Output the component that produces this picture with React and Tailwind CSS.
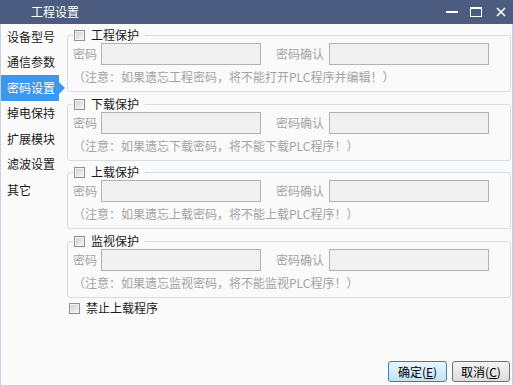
import { useState } from "react";

const menu = ["设备型号", "通信参数", "密码设置", "掉电保持", "扩展模块", "滤波设置", "其它"];

const groups = [
    { title: "工程保护", note: "（注意：如果遗忘工程密码，将不能打开PLC程序并编辑！）", gap: "mt-0" },
    { title: "下载保护", note: "（注意：如果遗忘下载密码，将不能下载PLC程序！）", gap: "mt-[5px]" },
    { title: "上载保护", note: "（注意：如果遗忘上载密码，将不能上载PLC程序！）", gap: "mt-[4px]" },
    { title: "监视保护", note: "（注意：如果遗忘监视密码，将不能监视PLC程序！）", gap: "mt-[5px]" },
];

function CheckBox({ checked, onClick }) {
    return (
        <span
            onClick={onClick}
            className="w-[11px] h-[11px] shrink-0 border border-[#8f8f8f] bg-gradient-to-br from-[#cfcfcf] to-[#f7f7f7] shadow-[inset_0_0_0_1px_#f2f2f2] flex items-center justify-center text-[9px] leading-none text-[#333]"
        >
            {checked ? "✓" : ""}
        </span>
    );
}

function Group({ title, note, gap, checked, onToggle }) {
    return (
        <fieldset className={`${gap} border border-[#d5dde6] rounded-[3px] px-[5px] pb-[6px] h-[64px]`}>
            <legend className="px-[1px] pr-[6px] h-[14px] flex items-center gap-[6px] text-[12px] leading-[14px] text-[#1a1a1a]">
                <CheckBox checked={checked} onClick={onToggle} />
                <span>{title}</span>
            </legend>
            <div className="mt-[1px] flex items-center text-[12px] text-[#a3a3a3]">
                <span className="w-[24px] leading-[14px]">密码</span>
                <input disabled className="ml-[4px] w-[160px] h-[22px] border border-[#b2b2b2] bg-[#f0f0f0]" />
                <span className="ml-[15px] leading-[14px]">密码确认</span>
                <input disabled className="ml-[5px] w-[160px] h-[22px] border border-[#b2b2b2] bg-[#f0f0f0]" />
            </div>
            <p className="mt-[5px] text-[12px] leading-[14px] text-[#a3a3a3]">{note}</p>
        </fieldset>
    );
}

export default function App() {
    const [checks, setChecks] = useState([false, false, false, false]);
    const [noUpload, setNoUpload] = useState(false);
    const active = 2;

    const toggle = (i) => setChecks(checks.map((c, j) => (j === i ? !c : c)));

    return (
        <div className="w-[513px] h-[386px] flex flex-col bg-[#fafafa] border-x border-b border-[#c8cfdf] font-['Noto_Sans_CJK_SC',sans-serif] select-none">
            {/* Title bar */}
            <div className="h-[24px] shrink-0 -mx-px bg-[#4b5c80] flex items-center text-white">
                <span className="ml-[31px] text-[12px] leading-none">工程设置</span>
                <div className="ml-auto flex items-center">
                    <span className="w-[12px] h-[2px] bg-white" />
                    <span className="ml-[12px] w-[12px] h-[10px] border border-white border-t-2" />
                    <svg className="ml-[14px] mr-[7px]" width="10" height="10" viewBox="0 0 10 10">
                        <path d="M1 1 L9 9 M9 1 L1 9" stroke="#fff" strokeWidth="1.6" />
                    </svg>
                </div>
            </div>

            <div className="flex-1 flex min-h-0">
                {/* Sidebar */}
                <div className="w-[66px] shrink-0 flex flex-col">
                    {menu.map((m, i) =>
                        i === active ? (
                            <div key={m} className="h-[25.5px] flex items-center">
                                <div className="w-[58px] h-full bg-[#3c97ef] flex items-center pl-[6px] text-[12px] text-white">{m}</div>
                                <span className="w-0 h-0 border-y-[6px] border-y-transparent border-l-[6px] border-l-[#3c97ef]" />
                            </div>
                        ) : (
                            <div key={m} className="h-[25.5px] flex items-center pl-[6px] text-[12px] text-[#1a1a1a]">
                                {m}
                            </div>
                        )
                    )}
                </div>

                {/* Content */}
                <div className="flex-1 flex flex-col pt-[4px] pr-[1px] pb-[3px]">
                    {groups.map((g, i) => (
                        <Group key={g.title} {...g} checked={checks[i]} onToggle={() => toggle(i)} />
                    ))}

                    <label className="mt-[3px] ml-[2px] flex items-center gap-[6px] text-[12px] leading-[14px] text-[#1a1a1a]">
                        <CheckBox checked={noUpload} onClick={() => setNoUpload(!noUpload)} />
                        <span>禁止上载程序</span>
                    </label>

                    <div className="mt-auto flex justify-end gap-[5px] pr-[1px]">
                        <button className="w-[59px] h-[21px] rounded-[3px] border border-[#3c7fb1] bg-gradient-to-b from-[#e8f5fd] to-[#c2e3f6] text-[12px] leading-none text-black">
                            确定(<span className="underline">E</span>)
                        </button>
                        <button className="w-[58px] h-[21px] rounded-[3px] border border-[#707070] bg-gradient-to-b from-[#f4f4f4] to-[#dcdcdc] text-[12px] leading-none text-black">
                            取消(<span className="underline">C</span>)
                        </button>
                    </div>
                </div>
            </div>
        </div>
    );
}
